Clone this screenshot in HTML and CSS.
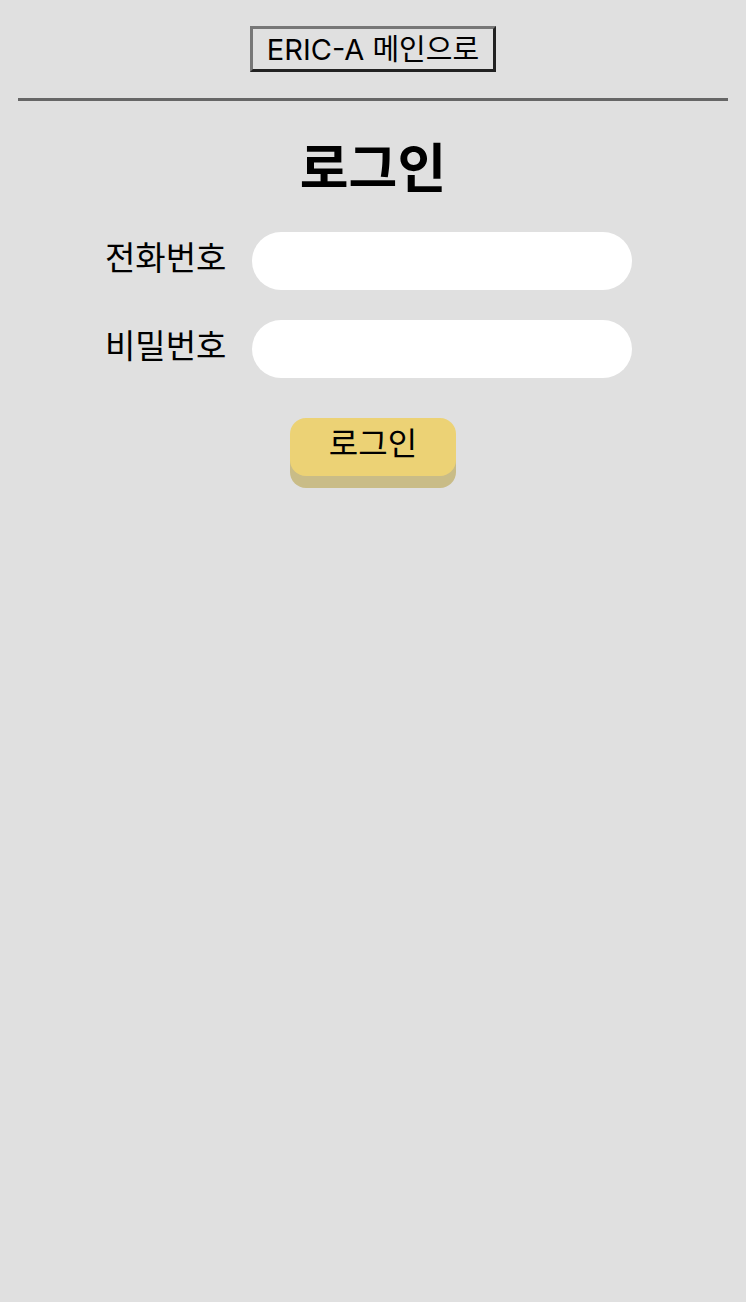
FILE: index.html
```html
<!DOCTYPE html>
<html lang="ko">
<head>
    <meta charset="UTF-8">
    <meta name="viewport" content="width=device-width, initial-scale=1.0">
    <title>로그인</title>
    <link rel="stylesheet" href="styles.css">
</head>
<body>
    <div class="page">
        <div class="top">
            <button class="home-btn">ERIC-A 메인으로</button>
        </div>
        <hr class="divider">

        <h1 class="title">로그인</h1>

        <form class="login-form" onsubmit="return false;">
            <div class="row">
                <label class="label" for="phone">전화번호</label>
                <input class="field" type="text" id="phone">
            </div>
            <div class="row">
                <label class="label" for="password">비밀번호</label>
                <input class="field" type="password" id="password">
            </div>
            <div class="actions">
                <button class="login-btn" type="submit">로그인</button>
            </div>
        </form>
    </div>
</body>
</html>
```

FILE: styles.css
```css
html, body {
    margin: 0;
    padding: 0;
}

body {
    background-color: #e0e0e0;
    font-family: "Inter", "Noto Sans CJK KR", sans-serif;
    color: #000;
}

.page {
    padding: 26px 18px 0;
}

.top {
    display: flex;
    justify-content: center;
}

/* Old-school outset button */
.home-btn {
    width: 246px;
    height: 46px;
    padding: 0;
    font-family: inherit;
    font-size: 29px;
    line-height: 1;
    color: #000;
    background-color: #e0e0e0;
    border: 3px solid;
    border-color: #777 #222 #222 #777;
    cursor: pointer;
}

.divider {
    margin: 26px 0 0;
    height: 3px;
    border: none;
    background-color: #666;
}

.title {
    margin: 38px 0 0;
    font-size: 53px;
    line-height: 60px;
    font-weight: bold;
    text-align: center;
}

.login-form {
    width: 527px;
    padding-right: 9px;
    margin: 33px auto 0;
    display: flex;
    flex-direction: column;
    gap: 30px;
}

.row {
    display: flex;
    align-items: center;
    gap: 26px;
}

.label {
    width: 121px;
    font-size: 33px;
    line-height: 1;
    text-align: right;
    white-space: nowrap;
    position: relative;
    top: -3px;
}

.field {
    width: 380px;
    height: 58px;
    box-sizing: border-box;
    padding: 0 24px;
    border: none;
    border-radius: 29px;
    background-color: #fff;
    font-family: inherit;
    font-size: 22px;
    outline: none;
}

.actions {
    display: flex;
    justify-content: center;
    padding-left: 9px;
    margin-top: 10px;
    padding-bottom: 12px;
}

.login-btn {
    width: 166px;
    height: 58px;
    padding: 0 0 6px;
    font-family: inherit;
    font-size: 32px;
    line-height: 1;
    color: #000;
    background-color: #ecd275;
    border: none;
    border-radius: 16px;
    box-shadow: 0 12px 0 0 #c9bc87;
    cursor: pointer;
}
```
